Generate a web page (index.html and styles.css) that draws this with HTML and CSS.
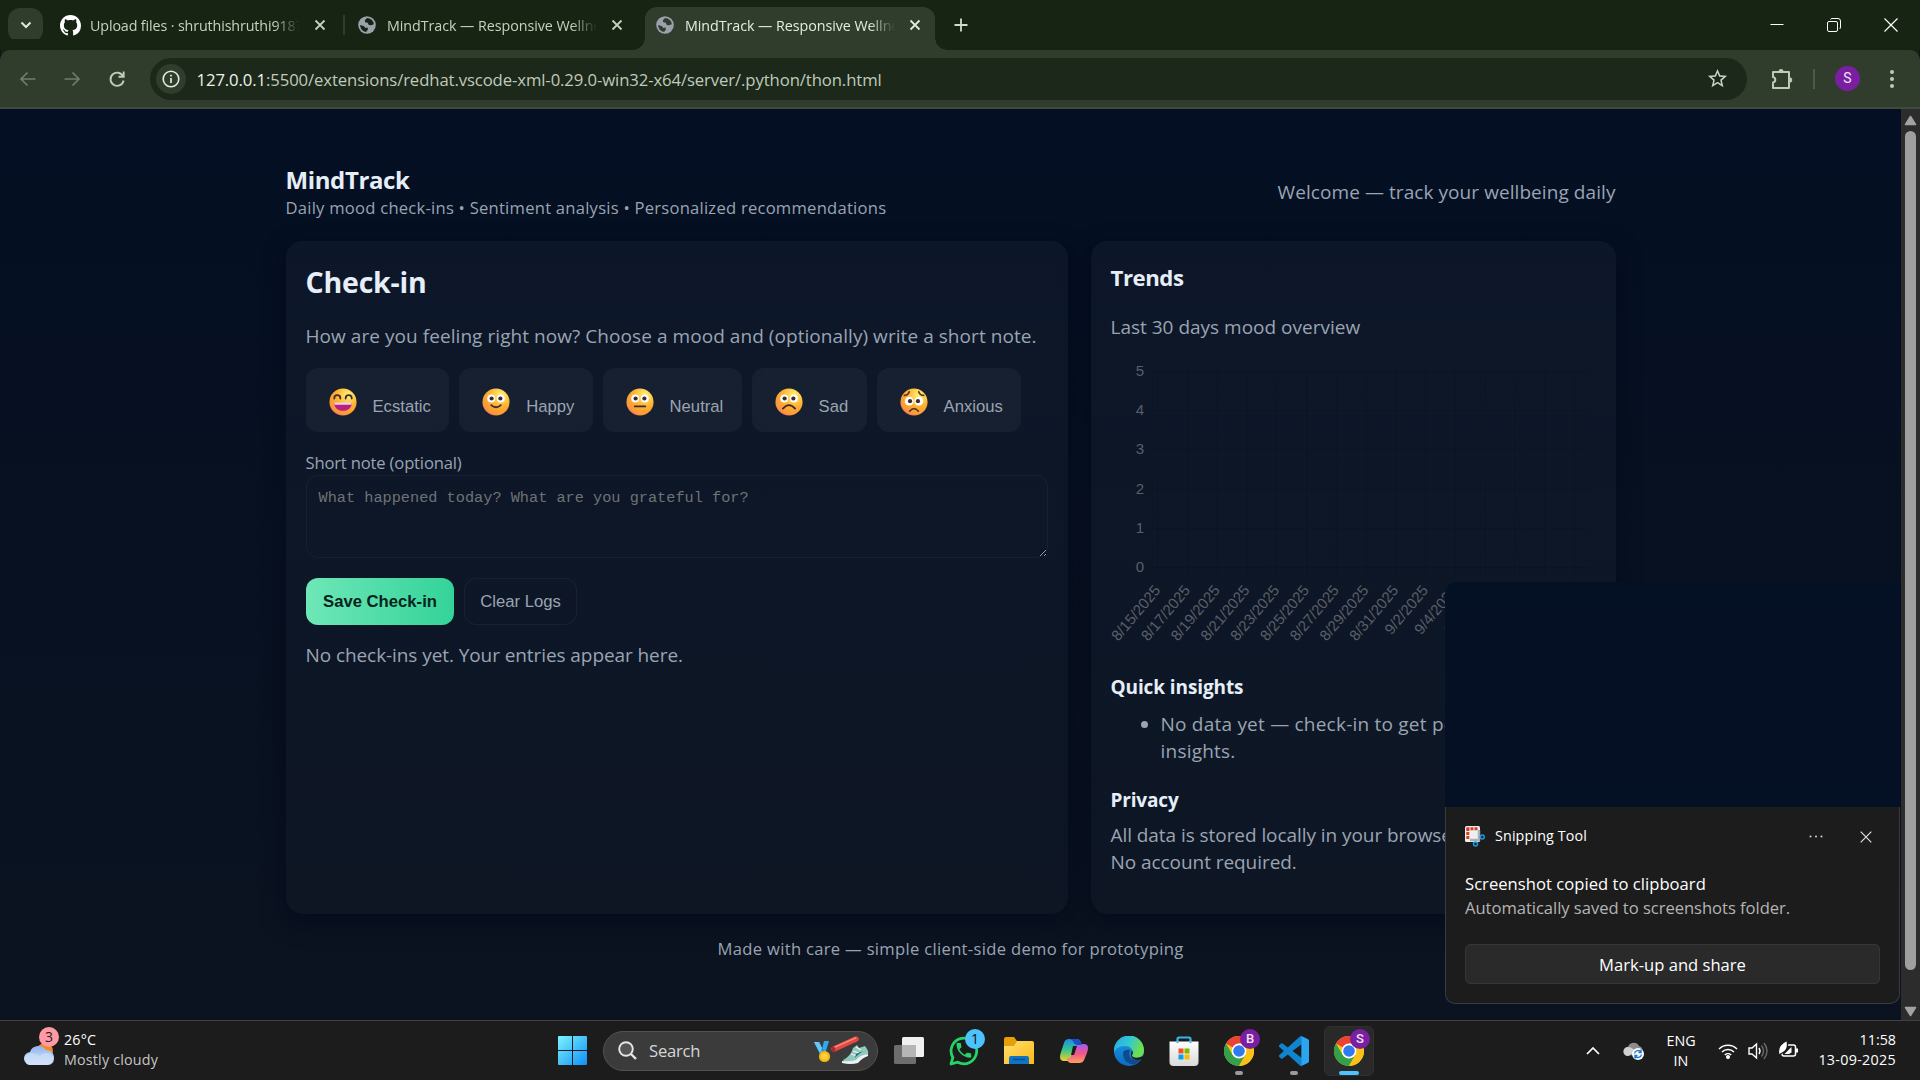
FILE: index.html
```html
<!DOCTYPE html>
<html lang="en">
<head>
<meta charset="utf-8">
<title>MindTrack — Responsive Wellness</title>
<link rel="stylesheet" href="styles.css">
</head>
<body>
<svg class="defs" width="0" height="0" aria-hidden="true">
  <defs>
    <radialGradient id="face" cx=".68" cy=".25" r=".85"><stop offset="0" stop-color="#fff478"/><stop offset=".5" stop-color="#ffb02e"/><stop offset=".85" stop-color="#f9983a"/><stop offset="1" stop-color="#f0656e"/></radialGradient>
    <linearGradient id="win" x1="0" y1="0" x2="1" y2="1"><stop offset="0" stop-color="#7df3fd"/><stop offset="1" stop-color="#0f8ff8"/></linearGradient>
    <linearGradient id="folder" x1="0" y1="0" x2="1" y2="1"><stop offset="0" stop-color="#ffdf70"/><stop offset="1" stop-color="#fcb913"/></linearGradient>
    <linearGradient id="edgeTop" x1="0" y1="0" x2="1" y2=".4"><stop offset="0" stop-color="#2ba6e0"/><stop offset=".5" stop-color="#2fc6d8"/><stop offset="1" stop-color="#6fe04c"/></linearGradient>
    <linearGradient id="edgeLow" x1="0" y1="0" x2="0" y2="1"><stop offset="0" stop-color="#1b9de2"/><stop offset="1" stop-color="#0c6cc4"/></linearGradient>
    <linearGradient id="copA" x1="0" y1="0" x2="0" y2="1"><stop offset="0" stop-color="#1a8be8"/><stop offset=".5" stop-color="#3cc48c"/><stop offset="1" stop-color="#f3cf28"/></linearGradient>
    <linearGradient id="copB" x1="0" y1="0" x2="0" y2="1"><stop offset="0" stop-color="#a05cf0"/><stop offset=".5" stop-color="#f0568c"/><stop offset="1" stop-color="#ffa05c"/></linearGradient>
    <linearGradient id="cloud" x1="0" y1="0" x2="0" y2="1"><stop offset="0" stop-color="#8fb4ec"/><stop offset="1" stop-color="#dce8fb"/></linearGradient>
    <linearGradient id="bag" x1="0" y1="0" x2="0" y2="1"><stop offset="0" stop-color="#ffffff"/><stop offset="1" stop-color="#d9d9d9"/></linearGradient>
    <symbol id="globe" viewBox="0 0 20 20"><circle cx="10" cy="10" r="9.8" fill="#9aa0ac"/><path d="M10 2.2 7.6 4.6 8 7 10.8 7.4 12 10 14.4 10.2 17.6 9.2A7.8 7.8 0 0 0 10 2.2zM2.3 10 6.8 11.4 8 13.4 10.6 12.8 11 15 9 17.8A7.8 7.8 0 0 1 2.3 10z" fill="var(--hole)"/></symbol>
    <symbol id="close" viewBox="0 0 12 12"><path d="M1.5 1.5l9 9m0-9l-9 9" stroke="currentColor" stroke-width="1.8"/></symbol>
    <symbol id="chrome" viewBox="0 0 30 30"><circle cx="15" cy="15" r="15" fill="#fbc116"/><path d="M15 15 2 7.5A15 15 0 0 1 28 7.5H15z" fill="#ea4335"/><path d="M2 7.5A15 15 0 0 0 15 30L21.5 18.7 15 15 8.5 18.7z" fill="#34a04a"/><path d="M15 7.5H28A15 15 0 0 1 15 30L21.5 18.7z" fill="#fbc116"/><circle cx="15" cy="15" r="7.4" fill="#fff"/><circle cx="15" cy="15" r="5.8" fill="#2f7bed"/></symbol>
  </defs>
</svg>

<header class="tabstrip">
  <button class="tab-search"><svg width="12" height="8" viewBox="0 0 12 8"><path d="M1.5 1.5 6 6l4.500-4.500" fill="none" stroke="#dfe8d8" stroke-width="2"/></svg></button>
  <div class="tab tab-first">
    <svg width="21" height="21" viewBox="0 0 16 16"><path fill="#fff" d="M8 0C3.58 0 0 3.58 0 8c0 3.54 2.29 6.53 5.47 7.590.4.07.55-.17.55-.38 0-.19-.01-.82-.01-1.490-2.010.37-2.530-.49-2.690-.94-.09-.23-.48-.94-.82-1.130-.28-.15-.68-.52-.01-.53.63-.01 1.080.58 1.230.82.72 1.210 1.870.87 2.330.66.07-.52.28-.87.51-1.070-1.780-.2-3.640-.89-3.640-3.950 0-.87.31-1.590.82-2.150-.08-.2-.36-1.020.08-2.120 0 0 .67-.21 2.200.82.64-.18 1.320-.27 2-.27s1.360.09 2 .27c1.530-1.040 2.200-.82 2.200-.82.44 1.100.16 1.920.08 2.120.51.56.82 1.270.82 2.150 0 3.070-1.870 3.750-3.650 3.950.29.25.54.73.54 1.480 0 1.070-.01 1.930-.01 2.200 0 .21.15.46.55.38A8.010 8.010 0 0 0 16 8c0-4.420-3.580-8-8-8z"/></svg>
    <span class="tab-title">Upload files · shruthishruthi9187</span>
    <svg class="tab-x" width="12" height="12"><use href="#close"/></svg>
  </div>
  <i class="tab-sep"></i>
  <div class="tab tab-second">
    <svg width="18" height="18"><use href="#globe"/></svg>
    <span class="tab-title">MindTrack — Responsive Wellness</span>
    <svg class="tab-x" width="12" height="12"><use href="#close"/></svg>
  </div>
  <div class="tab tab-active">
    <svg width="18" height="18"><use href="#globe"/></svg>
    <span class="tab-title">MindTrack — Responsive Wellness</span>
    <svg class="tab-x" width="12" height="12"><use href="#close"/></svg>
  </div>
  <svg class="new-tab" width="14" height="14" viewBox="0 0 14 14"><path d="M7 .5v13M.5 7h13" stroke="#cfdcc8" stroke-width="1.800"/></svg>
  <div class="win-controls">
    <svg width="14" height="14" viewBox="0 0 14 14"><path d="M.5 6.500h13" stroke="#fff"/></svg>
    <svg width="14" height="14" viewBox="0 0 14 14" fill="none" stroke="#fff"><rect x=".5" y="3.500" width="10" height="10" rx="1.500"/><path d="M3.500 1.500Q4 .5 5 .5h6q2.500 0 2.500 2.500v6q0 1.500-1 2"/></svg>
    <svg width="14" height="14" viewBox="0 0 14 14"><path d="M.5.5l13 13m0-13l-13 13" stroke="#fff" stroke-width="1.200"/></svg>
  </div>
</header>

<nav class="toolbar">
  <svg class="nav-ico dim" width="18" height="18" viewBox="0 0 18 18"><path d="M16.500 9H2.500M8.500 2.500 2 9l6.500 6.500" fill="none" stroke="currentColor" stroke-width="1.700"/></svg>
  <svg class="nav-ico dim" width="18" height="18" viewBox="0 0 18 18"><path d="M1.500 9h14M9.500 2.500 16 9l-6.500 6.500" fill="none" stroke="currentColor" stroke-width="1.700"/></svg>
  <svg class="nav-ico" width="18" height="18" viewBox="0 0 18 18"><path d="M15 6.200A6.600 6.600 0 1 0 15.600 10.500M15.700 1.500V6.700H10.500" fill="none" stroke="currentColor" stroke-width="1.900"/></svg>
  <div class="omnibox">
    <span class="site-info"><svg width="18" height="18" viewBox="0 0 18 18"><circle cx="9" cy="9" r="7.800" fill="none" stroke="#e3ebdf" stroke-width="1.600"/><path d="M9 8v5M9 4.800v1.800" stroke="#e3ebdf" stroke-width="1.700"/></svg></span>
    <span class="url"><b>127.0.0.1</b>:5500/extensions/redhat.vscode-xml-0.29.0-win32-x64/server/.python/thon.html</span>
    <svg class="star" width="23" height="23" viewBox="0 0 24 24"><path fill="#c9d2c5" d="M22 9.240l-7.190-.62L12 2 9.190 8.630 2 9.240l5.460 4.730L5.820 21 12 17.270 18.180 21l-1.630-7.030L22 9.240zM12 15.400l-3.760 2.270 1-4.280-3.320-2.880 4.380-.38L12 6.100l1.710 4.040 4.380.38-3.320 2.880 1 4.280L12 15.400z"/></svg>
  </div>
  <svg class="ext" width="22" height="22" viewBox="0 0 22 22"><path d="M2 4h16v16H2v-5.500a2.800 2.800 0 0 0 0-5.500z" fill="none" stroke="#bccdb4" stroke-width="2" stroke-linejoin="round"/><path d="M7.500 3.500a2.500 2.500 0 0 1 5 0zM18.500 9.300a2.500 2.500 0 0 1 0 5.400z" fill="#bccdb4"/></svg>
  <i class="bar-sep"></i>
  <span class="avatar">S</span>
  <svg class="more" width="4" height="20" viewBox="0 0 4 20" fill="#bccdb4"><circle cx="2" cy="3" r="2"/><circle cx="2" cy="10" r="2"/><circle cx="2" cy="17" r="2"/></svg>
</nav>

<div class="viewport">
  <main class="page">
    <div class="wrap">
      <header class="app-head">
        <div>
          <h1>MindTrack</h1>
          <div class="sub">Daily mood check-ins • Sentiment analysis • Personalized recommendations</div>
        </div>
        <div class="welcome">Welcome — track your wellbeing daily</div>
      </header>

      <div class="columns">
        <section class="card">
          <h2>Check-in</h2>
          <p class="prompt">How are you feeling right now? Choose a mood and (optionally) write a short note.</p>
          <div class="moods">
            <button class="mood"><svg width="28" height="28" viewBox="0 0 32 32"><circle cx="16" cy="16" r="15.500" fill="url(#face)"/><path d="M6 12c0-5 7-5 7 0M19 12c0-5 7-5 7 0" fill="none" stroke="#402a32" stroke-width="2" stroke-linecap="round"/><path d="M6 17h20c0 12-20 12-20 0z" fill="#bb1d80"/><path d="M6 16.500h20l-.4 2.500H6.400z" fill="#e9d3e6"/></svg><span>Ecstatic</span></button>
            <button class="mood"><svg width="28" height="28" viewBox="0 0 32 32"><circle cx="16" cy="16" r="15.500" fill="url(#face)"/><circle cx="10.500" cy="12" r="4.500" fill="#fff"/><circle cx="21.500" cy="12" r="4.500" fill="#fff"/><circle cx="11" cy="12" r="2.400" fill="#402a32"/><circle cx="21" cy="12" r="2.400" fill="#402a32"/><path d="M10.500 19.500q5.500 5 11 0" fill="none" stroke="#402a32" stroke-width="2" stroke-linecap="round"/></svg><span>Happy</span></button>
            <button class="mood"><svg width="28" height="28" viewBox="0 0 32 32"><circle cx="16" cy="16" r="15.500" fill="url(#face)"/><circle cx="10.500" cy="12" r="4.500" fill="#fff"/><circle cx="21.500" cy="12" r="4.500" fill="#fff"/><circle cx="11" cy="12" r="2.400" fill="#402a32"/><circle cx="21" cy="12" r="2.400" fill="#402a32"/><path d="M10 21h12" fill="none" stroke="#402a32" stroke-width="2" stroke-linecap="round"/></svg><span>Neutral</span></button>
            <button class="mood"><svg width="28" height="28" viewBox="0 0 32 32"><circle cx="16" cy="16" r="15.500" fill="url(#face)"/><circle cx="10.500" cy="12" r="4.500" fill="#fff"/><circle cx="21.500" cy="12" r="4.500" fill="#fff"/><circle cx="11" cy="12" r="2.400" fill="#402a32"/><circle cx="21" cy="12" r="2.400" fill="#402a32"/><path d="M9 23.500q7-8 14 0" fill="none" stroke="#402a32" stroke-width="2" stroke-linecap="round"/></svg><span>Sad</span></button>
            <button class="mood"><svg width="28" height="28" viewBox="0 0 32 32"><circle cx="16" cy="16" r="15.500" fill="url(#face)"/><circle cx="10.500" cy="15" r="5" fill="#fff"/><circle cx="21.500" cy="15" r="5" fill="#fff"/><circle cx="11.500" cy="15" r="2.400" fill="#402a32"/><circle cx="20.500" cy="15" r="2.400" fill="#402a32"/><path d="M5 8.500q4 0 5.500-4M27 8.500q-4 0-5.500-4M11 26.500q5-6 10 0" fill="none" stroke="#5a3528" stroke-width="2" stroke-linecap="round"/></svg><span>Anxious</span></button>
          </div>
          <label class="note-label" for="note">Short note (optional)</label>
          <textarea id="note" placeholder="What happened today? What are you grateful for?"></textarea>
          <div class="actions">
            <button class="btn btn-primary">Save Check-in</button>
            <button class="btn btn-ghost">Clear Logs</button>
          </div>
          <p class="entries">No check-ins yet. Your entries appear here.</p>
        </section>

        <aside class="card">
          <h3>Trends</h3>
          <p class="overview">Last 30 days mood overview</p>
          <svg class="chart" id="chart" width="485" height="313" viewBox="1111 350 485 313"></svg>
          <h4 class="insights-head">Quick insights</h4>
          <ul><li>No data yet — check-in to get personalized insights.</li></ul>
          <h4 class="privacy-head">Privacy</h4>
          <p class="privacy">All data is stored locally in your browser. No account required.</p>
        </aside>
      </div>
      <footer class="foot">Made with care — simple client-side demo for prototyping</footer>
    </div>
  </main>
  <div class="scrollbar">
    <svg width="13" height="11" viewBox="0 0 13 11"><path d="M6.500 1.500 11.500 9.500H1.500z" fill="#a3a3a3" stroke="#a3a3a3" stroke-width="1.500" stroke-linejoin="round"/></svg>
    <i class="thumb"></i>
    <svg width="13" height="11" viewBox="0 0 13 11"><path d="M6.500 9.500 11.500 1.500H1.500z" fill="#a3a3a3" stroke="#a3a3a3" stroke-width="1.500" stroke-linejoin="round"/></svg>
  </div>
</div>

<footer class="taskbar">
  <div class="weather">
    <svg width="32" height="34" viewBox="0 0 32 34"><circle cx="21" cy="17" r="8" fill="#f7891e"/><path d="M7 31a6.500 6.500 0 0 1-1-13 9 9 0 0 1 16-2 7.500 7.500 0 0 1 1 15z" fill="url(#cloud)"/><path d="M1 25a6.500 6.500 0 0 1 10-5 7 7 0 0 1 5 2 8 8 0 0 1 14 3 6 6 0 0 1-7 6H7a6 6 0 0 1-6-6z" fill="#cddffa" opacity=".7"/></svg>
    <span class="badge badge-pink">3</span>
    <div class="weather-text"><div>26°C</div><div class="grey">Mostly cloudy</div></div>
  </div>
  <div class="app"><svg width="29" height="29" viewBox="0 0 29 29" fill="url(#win)"><path d="M1 0h13v14H0V1q0-1 1-1zM15 0h13q1 0 1 1v13H15zM0 15h14v14H1q-1 0-1-1zM15 15h14v13q0 1-1 1H15z"/></svg></div>
  <div class="search">
    <svg width="19" height="19" viewBox="0 0 19 19"><circle cx="8" cy="8" r="6.800" fill="#555" stroke="#e6e6e6" stroke-width="1.900"/><path d="M13 13l5 5" stroke="#e6e6e6" stroke-width="2.400"/></svg>
    <span class="search-text">Search</span>
    <svg class="decor" width="57" height="30" viewBox="0 0 57 30"><path d="M1 6h5l5 10-4 2zM16 5h-5l-2 8 3 5z" fill="#2fa9ea"/><path d="M1 6h5l3 6-2 5z" fill="#66c6f5"/><circle cx="11.500" cy="20.500" r="5.600" fill="#fbb417"/><circle cx="11.500" cy="20.500" r="3.300" fill="#fdd23c"/><path d="M21 13 43 3" stroke="#e4483f" stroke-width="5.500" stroke-linecap="round"/><path d="M21 11.500 43 1.800" stroke="#f7867a" stroke-width="1.800"/><ellipse cx="20.500" cy="13.300" rx="1.800" ry="2.800" fill="#a92a2c"/><path d="M30 24q8-4 10-12l4-3 2 3 6-2q4 5 3 8-8 3-11 7-5 3-12 2z" fill="#8fc9bf"/><path d="M38 18l6 2m-4-5 6 2m-3-6 5 3" stroke="#e9f6f3" stroke-width="1.300"/><path d="M42 22q5-6 10-7-6 1-9 3z" fill="#2e6e6b"/><path d="M29 25q9 1 14-1 4-5 12-6v2q-6 2-10 7-7 2-16 0z" fill="#eef0f4"/></svg>
  </div>
  <div class="app"><svg width="30" height="28" viewBox="0 0 30 28"><rect x="0" y="8" width="22" height="19" rx="1.500" fill="#6d6d6d"/><rect x="8" y="0" width="22" height="20" rx="1.500" fill="#f0f0f0"/><path d="M8 8h14v12H9.500Q8 20 8 18.500z" fill="#b5b5b5"/></svg></div>
  <div class="app"><svg width="30" height="30" viewBox="0 0 30 30"><path d="M2 28 3.900 21.500A12.800 12.800 0 1 1 8.800 26.200z" fill="none" stroke="#25d366" stroke-width="2.800" stroke-linejoin="round"/><path d="M6.620 10.790c1.440 2.830 3.760 5.140 6.590 6.590l2.200-2.200c.27-.27.67-.36 1.020-.24 1.120.37 2.330.57 3.570.57.55 0 1 .45 1 1V20c0 .55-.45 1-1 1-9.390 0-17-7.610-17-17 0-.55.45-1 1-1h3.500c.55 0 1 .45 1 1 0 1.250.2 2.450.57 3.570.11.35.03.74-.25 1.020z" transform="translate(5 4.500) scale(.82)" fill="#25d366"/></svg><span class="badge badge-blue">1</span></div>
  <div class="app"><svg width="30" height="27" viewBox="0 0 30 27"><path d="M0 2q0-2 2-2h8l3 4h15v6H0z" fill="#e3a008"/><path d="M0 9h10l3-5h15q2 0 2 2v21H0z" fill="url(#folder)"/><path d="M5 27v-6q0-2 2-2h16q2 0 2 2v6z" fill="#0f74c4"/><path d="M9 22.500h12" stroke="#0a4c88" stroke-width="1.500"/></svg></div>
  <div class="app"><svg width="28" height="26" viewBox="0 0 28 26"><path d="M9 1h8q3 0 4 4l1 3h-4q-3 0-4 3l-3 9q-1 3-4 3H4q-4 0-4-4 0-2 1-5L4 5q1-4 5-4z" fill="url(#copA)"/><path d="M19 25h-8q-3 0-4-4l1-1q3 0 4-3l3-8q1-3 4-3h5q4 0 4 4 0 2-1 5l-3 7q-1 3-5 3z" fill="url(#copB)"/><path d="M10 1h7q3 0 4 4l1 2h-5q-2 0-3-2-1-3-4-4z" fill="#1750c8"/><path d="M13 8h4l-3 9h-3z" fill="#1c1c1c"/></svg></div>
  <div class="app"><svg width="30" height="30" viewBox="0 0 30 30"><circle cx="15" cy="15" r="15" fill="url(#edgeLow)"/><path d="M0 15A15 15 0 0 1 30 14c0 6-4 8-8 8-3 0-5-1-4-3 2-3 0-9-7-9-6 0-10 3-11 7z" fill="url(#edgeTop)"/><path d="M9 17c0 8 6 12 12 11 3-1 6-3 7-5-9 3-15-1-12-9-4-1-7 1-7 3z" fill="#114a8b"/><path d="M18 14.500c2 2 0 4 0 5 1 3 7 3 12 0v3c-7 3-13 1-13-4 0-1 .5-3 1-4z" fill="#1c1c1c"/></svg></div>
  <div class="app"><svg width="30" height="30" viewBox="0 0 30 30"><path d="M8.500 7V3q0-1.500 1.500-1.500h10q1.500 0 1.500 1.500v4" fill="none" stroke="#35b5ee" stroke-width="2.200"/><path d="M.5 5.500h29V26q0 4-4 4h-21q-4 0-4-4z" fill="url(#bag)"/><path d="M9.500 12.500h5v5h-5z" fill="#f25022"/><path d="M15.500 12.500h5v5h-5z" fill="#7fba00"/><path d="M9.500 18.500h5v5h-5z" fill="#00a4ef"/><path d="M15.500 18.500h5v5h-5z" fill="#ffb900"/><path d="M8.500 7V5.500M21.500 7V5.500" stroke="#35b5ee" stroke-width="2.200"/></svg></div>
  <div class="app"><svg width="30" height="30"><use href="#chrome"/></svg><span class="badge badge-purple">B</span><i class="run"></i></div>
  <div class="app"><svg width="30" height="30" viewBox="0 0 24 24"><path fill="#1184cf" d="M23.150 2.587L18.210.21a1.494 1.494 0 0 0-1.705.29l-9.460 8.630-4.120-3.128a.999.999 0 0 0-1.276.057L.327 7.261A1 1 0 0 0 .326 8.740L3.899 12 .326 15.260a1 1 0 0 0 .001 1.479L1.650 17.940a.999.999 0 0 0 1.276.057l4.120-3.128 9.460 8.630a1.492 1.492 0 0 0 1.704.290l4.942-2.377A1.500 1.500 0 0 0 24 20.060V3.939a1.500 1.500 0 0 0-.850-1.352zm-5.146 14.861L10.826 12l7.178-5.448v10.896z"/><path fill="#2ba5f0" d="M18 .2 23.150 2.587A1.500 1.500 0 0 1 24 3.939V20.060a1.500 1.500 0 0 1-.850 1.350L18 23.800z"/></svg><i class="run"></i></div>
  <div class="app"><span class="tile"></span><svg width="30" height="30"><use href="#chrome"/></svg><span class="badge badge-purple">S</span><i class="run run-on"></i></div>
  <div class="tray">
    <div class="cell"><svg width="14" height="8" viewBox="0 0 14 8"><path d="M1 7l6-6 6 6" fill="none" stroke="#fff" stroke-width="1.700"/></svg></div>
    <div class="cell"><svg width="21" height="18" viewBox="0 0 21 18"><path d="M5 14a4.500 4.500 0 0 1 0-9 6 6 0 0 1 11-1 4 4 0 0 1 2 7z" fill="#8d8d8d"/><path d="M5 14a4.500 4.500 0 0 1 0-9q4 0 8 5z" fill="#d0d0d0"/><circle cx="15" cy="12" r="6" fill="#fff"/><path d="M11.500 11.500a3.600 3.600 0 0 1 6.500-1.500m0-2.500v3h-2.500M18.500 12.500a3.600 3.600 0 0 1-6.500 1.500m0 2.500v-3h2.500" fill="none" stroke="#1477d2" stroke-width="1.400"/></svg></div>
    <div class="lang"><div>ENG</div><div>IN</div></div>
    <div class="quick">
      <svg width="20" height="16" viewBox="0 0 20 16" fill="none" stroke="#fff" stroke-width="1.500"><path d="M1 6a12.800 12.800 0 0 1 18 0M4 9a8.600 8.600 0 0 1 12 0M6.800 12a4.700 4.700 0 0 1 6.400 0"/><circle cx="10" cy="14" r="1.300" fill="#fff"/></svg>
      <svg width="20" height="18" viewBox="0 0 20 18" fill="none" stroke="#fff" stroke-width="1.400"><path d="M1 6h3l4.500-4v14L4 12H1zM11 6q2 3 0 6"/><path d="M13.500 3.500q4 5.500 0 11M16 1q6 8 0 16" stroke="#6a6a6a"/></svg>
      <svg class="battery" width="20" height="18" viewBox="0 0 20 18"><rect x="4" y="5" width="13.500" height="11" rx="2" fill="none" stroke="#fff" stroke-width="1.500"/><path d="M13.500 7v5.500L11 14H6.500z" fill="#fff"/><path d="M18 8.500h2v4h-2z" fill="#fff"/><path d="M.5 13Q-.5 5 9 .5 11 10 5 12.500L1 15z" fill="#fff" stroke="#1c1c1c" stroke-width="1.300"/></svg>
    </div>
    <div class="clock"><div>11:58</div><div class="date">13-09-2025</div></div>
  </div>
</footer>

<div class="toast">
  <div class="preview"></div>
  <div class="toast-body">
    <div class="toast-head">
      <svg width="20" height="21" viewBox="0 0 20 21"><rect x="0" y="0" width="15" height="16" rx="1.500" fill="#eceff2"/><path d="M1.500 2.800h12M2.800 2v12" stroke="#dc3a1c" stroke-width="3" stroke-dasharray="3 1"/><path d="M14 4v10H5" fill="none" stroke="#a9b0b6" stroke-width="2.400"/><circle cx="17.300" cy="11" r="2" fill="none" stroke="#1b9be0" stroke-width="1.500"/><circle cx="10.500" cy="18" r="2" fill="none" stroke="#1b9be0" stroke-width="1.500"/></svg>
      <span class="toast-app">Snipping Tool</span>
      <svg class="dots" width="14" height="3" viewBox="0 0 14 3" fill="#d8d8d8"><circle cx="1.500" cy="1.500" r="1"/><circle cx="7" cy="1.500" r="1"/><circle cx="12.500" cy="1.500" r="1"/></svg>
      <svg width="12" height="12" viewBox="0 0 12 12"><path d="M.7.7l10.600 10.600m0-10.600L.7 11.300" stroke="#e0e0e0" stroke-width="1.200"/></svg>
    </div>
    <div class="toast-title">Screenshot copied to clipboard</div>
    <div class="toast-sub">Automatically saved to screenshots folder.</div>
    <button class="toast-btn">Mark-up and share</button>
  </div>
</div>
<script src="chart.js"></script>
</body>
</html>
```
FILE: chart.js
```js
// Draws the axes of the 30 day mood chart: one label for every second day.
const NS = 'http://www.w3.org/2000/svg';
const chart = document.getElementById('chart');
const left = 1157.8, right = 1589.6, top0 = 371.5, bottom = 567.5, step = 29.76;

function add(name, attrs, text) {
  const el = document.createElementNS(NS, name);
  for (const key in attrs) el.setAttribute(key, attrs[key]);
  if (text !== undefined) el.textContent = text;
  chart.appendChild(el);
}

for (let v = 0; v <= 5; v++) {
  const y = bottom - v * (bottom - top0) / 5;
  add('line', { class: 'grid', x1: 1147, x2: right, y1: y, y2: y });
  add('text', { class: 'tick', x: 1144, y: y + 4.5, 'text-anchor': 'end' }, v);
}
for (let i = 0; i < 15; i++) {
  const x = left + i * step;
  const day = new Date(2025, 7, 15 + i * 2);
  const label = (day.getMonth() + 1) + '/' + day.getDate() + '/' + day.getFullYear();
  add('line', { class: 'grid', x1: x, x2: x, y1: top0, y2: bottom + 10 });
  add('text', { class: 'tick', 'text-anchor': 'end', transform: `translate(${x - 0.5} ${587.5}) rotate(-50)`, y: 5 }, label);
}
```
FILE: styles.css
```css
* { box-sizing: border-box; }
body { margin: 0; width: 1920px; height: 1080px; overflow: hidden; display: flex; flex-direction: column; background: #0b1320; font-family: "Open Sans", "Noto Sans", sans-serif; color: #9aa4b2; position: relative; }
h1, h2, h3, h4, p, ul { margin: 0; }
button { font-family: inherit; border: 0; padding: 0; }
svg { display: block; flex: none; }
.defs { position: absolute; }

/* browser tabs */
.tabstrip { height: 50px; flex: none; background: #172313; display: flex; align-items: center; padding-left: 8px; --hole: #172313; }
.tab-search { width: 35px; height: 34px; border-radius: 12px; background: #303d2d; display: grid; place-items: center; }
.tab { display: flex; align-items: center; height: 43px; color: #c4d3bc; font-size: 14.3px; letter-spacing: -.06px; }
.tab-title { width: 212px; overflow: hidden; white-space: nowrap; line-height: 24px; padding-top: 1px; -webkit-mask-image: linear-gradient(90deg, #000 184px, transparent 210px); mask-image: linear-gradient(90deg, #000 184px, transparent 210px); }
.tab-first { margin-left: 17px; letter-spacing: -.13px; }
.tab-first .tab-title { margin-left: 9px; }
.tab-x { margin-left: 12px; }
.tab-sep { width: 2px; height: 20px; background: #303d2d; margin-left: 17px; }
.tab-second { margin-left: 13px; }
.tab-second .tab-title { margin-left: 11px; }
.tab-x + .tab-x, .tab-second .tab-x { margin-left: 12px; }
.tab-active { background: #303d2d; align-self: flex-end; width: 290px; border-radius: 12px 12px 0 0; margin-left: 22px; padding: 0 0 7px 11px; color: #e3ebdf; --hole: #303d2d; position: relative; }
.tab-active .tab-title { margin-left: 11px; }
.tab-active::before, .tab-active::after { content: ""; position: absolute; bottom: 0; width: 12px; height: 12px; }
.tab-active::before { left: -12px; background: radial-gradient(circle at 0 0, transparent 11.5px, #303d2d 12px); }
.tab-active::after { right: -12px; background: radial-gradient(circle at 100% 0, transparent 11.5px, #303d2d 12px); }
.new-tab { margin-left: 19px; }
.win-controls { margin-left: auto; margin-right: 22px; display: flex; gap: 43px; }

/* address bar */
.toolbar { height: 59px; flex: none; background: #303d2d; border-bottom: 2px solid #3f4b3e; display: flex; align-items: center; padding: 0 26px 0 19px; color: #bccdb4; border-radius: 10px 10px 0 0; box-shadow: 0 -12px 0 -1px #172313; }
.nav-ico { margin-right: 26px; }
.nav-ico + .nav-ico { margin-right: 27px; }
.dim { color: #6f7d6a; }
.toolbar .nav-ico:nth-child(3) { margin-right: 24px; }
.omnibox { width: 1597px; height: 42px; border-radius: 21px; background: #1c2819; display: flex; align-items: center; padding-left: 6px; }
.site-info { width: 30px; height: 30px; border-radius: 50%; background: #303d2d; display: grid; place-items: center; }
.url { margin-left: 10.5px; padding-top: 1px; font-size: 16.7px; letter-spacing: -.1px; color: #c0cabb; white-space: nowrap; }
.url b { color: #eef3ea; font-weight: 400; }
.star { margin-left: auto; margin-right: 18px; }
.ext { margin-left: 24px; }
.bar-sep { width: 2px; height: 20px; background: #4a5a44; margin-left: 20px; }
.avatar { width: 25px; height: 25px; border-radius: 50%; background: #7b1fa2; color: #f0e4f5; font: 14px/25px Roboto, sans-serif; text-align: center; margin-left: 20px; }
.more { margin-left: auto; }

/* page */
.viewport { flex: 1; display: flex; min-height: 0; }
.page { width: 1901px; padding-top: 54px; background: linear-gradient(180deg, #040f23, #0b1320); }
.wrap { width: 1330px; margin: 0 auto; }
.app-head { display: flex; justify-content: space-between; align-items: center; height: 57px; margin-bottom: 21px; }
h1 { font-size: 24px; line-height: 33px; color: #e6eef8; letter-spacing: -.38px; }
.sub { font-size: 16.6px; line-height: 24px; letter-spacing: .24px; }
.welcome { font-size: 19px; line-height: 27px; padding-top: 2px; letter-spacing: .07px; }
.columns { display: grid; grid-template-columns: 782.5px 525px; gap: 22.5px; }
.card { height: 672.5px; padding: 21px 20px 0; border-radius: 17px; background: linear-gradient(180deg, rgba(255,255,255,.032), rgba(255,255,255,.014)); box-shadow: 0 8px 23px rgba(2,6,23,.6); }
h2 { font-size: 28.5px; line-height: 40px; color: #e6eef8; margin-bottom: 21px; letter-spacing: -.2px; }
.prompt, .entries, .overview, .privacy, li { font-size: 19px; line-height: 27px; }
.prompt { margin-bottom: 18px; white-space: nowrap; letter-spacing: .06px; }
.moods { display: flex; gap: 10px; margin-bottom: 19px; }
.mood { height: 63.5px; padding: 0 18.3px 0 23px; border-radius: 12px; background: rgba(255,255,255,.04); display: flex; align-items: center; gap: 16px; font: 16.67px "Liberation Sans", sans-serif; color: #9aa4b2; }
.mood svg { margin-top: 5px; }
.mood span { margin-top: 14px; }
.note-label { display: block; font-size: 16.6px; line-height: 24px; letter-spacing: -.17px; }
textarea { display: block; width: 742px; height: 83.5px; border: 1px solid rgba(255,255,255,.04); border-radius: 12px; background: transparent; padding: 12.5px 12px; font: 15.25px/20px "Liberation Mono", monospace; color: #e6eef8; resize: vertical; }
textarea::placeholder { color: #6f7276; }
.actions { display: flex; gap: 10px; margin: 20px 0 16.5px; }
.btn { height: 47px; border-radius: 12px; font: 16.67px "Liberation Sans", sans-serif; padding: 1px 0 0 1px; }
.btn-primary { width: 148px; font-weight: 700; color: #04231c; background: linear-gradient(90deg, #6ee7b7, #34d399); }
.btn-ghost { width: 113px; color: #9aa4b2; background: transparent; border: 1px solid rgba(255,255,255,.05); }
.entries { letter-spacing: -.08px; }
h3 { font-size: 22.2px; line-height: 31px; color: #e6eef8; margin-bottom: 21px; letter-spacing: -.45px; }
.chart { margin: 9px 0 11px; overflow: visible; }
.grid { stroke: rgba(0,0,0,.1); stroke-width: 1; }
.tick { font: 15px "Liberation Sans", sans-serif; fill: #5b5f66; }
h4 { font-size: 19px; line-height: 27px; color: #e6eef8; letter-spacing: -.1px; }
ul { margin: 10px 0 22px; padding-left: 50px; }
li { letter-spacing: .22px; }
.privacy-head { letter-spacing: -.17px; }
.privacy { margin-top: 8px; letter-spacing: -.06px; padding-right: 105px; }
.foot { margin-top: 23.5px; text-align: center; font-size: 16.6px; line-height: 24px; letter-spacing: .31px; }

.scrollbar { width: 19px; background: #2c2c2c; display: flex; flex-direction: column; align-items: center; padding: 6px 0 3px; }
.thumb { width: 11px; height: 839px; border-radius: 6px; background: #9f9f9f; margin: 5px 0 auto; }

/* taskbar */
.taskbar { height: 60px; flex: none; background: #1c1c1c; border-top: 1px solid #404040; display: flex; align-items: center; color: #fff; }
.weather { width: 544.5px; padding-left: 24px; display: flex; align-items: center; position: relative; font-size: 14.3px; line-height: 20px; }
.weather-text { margin-left: 8px; margin-top: -1px; letter-spacing: .185px; }
.grey { color: #c4c4c4; }
.badge { position: absolute; width: 20px; height: 20px; border-radius: 50%; text-align: center; font: 14px/20px "Open Sans", sans-serif; }
.badge-pink { left: 39px; top: -4px; background: #ff99a4; color: #222; }
.badge-blue { left: 28.5px; top: 8px; background: #4cc2ff; color: #111; }
.badge-purple { left: 28.5px; top: 8px; background: #7b1fa2; color: #f0e4f5; font: 500 13px/20px Roboto, sans-serif; }
.app { width: 55px; height: 59px; display: grid; place-items: center; position: relative; }
.app > * { grid-area: 1 / 1; }
.app svg { position: relative; }
.tile { width: 50px; height: 50px; border-radius: 6px; background: #292929; border: 1px solid #303030; }
.run { position: absolute; bottom: 5px; left: 23.5px; width: 8px; height: 4px; border-radius: 2px; background: #9a9a9a; }
.run-on { left: 17.5px; width: 20px; background: #4cc2ff; }
.search { width: 275px; height: 40px; margin: 0 3.5px; border-radius: 20px; background: #3b3b3b; border: 1px solid #525252; display: flex; align-items: center; padding: 0 7px 0 14px; }
.search-text { font-size: 16.6px; color: #d6d6d6; margin-left: 12px; letter-spacing: -.2px; }
.decor { margin-left: auto; }
.tray { margin-left: auto; padding-right: 24px; display: flex; align-items: center; font-size: 14.3px; line-height: 20px; }
.cell { width: 40px; display: grid; place-items: center; }
.lang { width: 56px; text-align: center; }
.quick { display: flex; gap: 10px; padding: 0 5px; margin-left: 4px; align-items: center; }
.battery { margin-top: -3px; }
.clock { width: 93px; text-align: right; margin-top: -2px; }
.date { letter-spacing: .3px; }

/* notification */
.toast { position: absolute; left: 1445px; top: 582px; width: 456px; }
.preview { height: 225px; border-radius: 11px 0 0 0; background: linear-gradient(180deg, #041023, #061024 50%, #041023); }
.toast-body { width: 455px; height: 197px; background: #1c1c1c; border: 1px solid #3b3b3e; border-top: 0; border-radius: 0 0 10px 10px; padding: 19px 19px 0; color: #fff; }
.toast-head { display: flex; align-items: center; height: 21px; font-size: 14.3px; padding-right: 8px; }
.toast-app { margin: -2px 0 0 10px; letter-spacing: .135px; }
.dots { margin: 0 37px 0 auto; }
.toast-title { font-size: 16.6px; line-height: 24px; margin-top: 25px; letter-spacing: .03px; }
.toast-sub { font-size: 16.6px; line-height: 24px; color: #b4b4b4; letter-spacing: -.04px; }
.toast-btn { display: block; width: 415px; height: 40px; margin-top: 24px; border-radius: 5px; background: #2a2a2a; border: 1px solid #363636; color: #fff; font-size: 16.6px; }
```
